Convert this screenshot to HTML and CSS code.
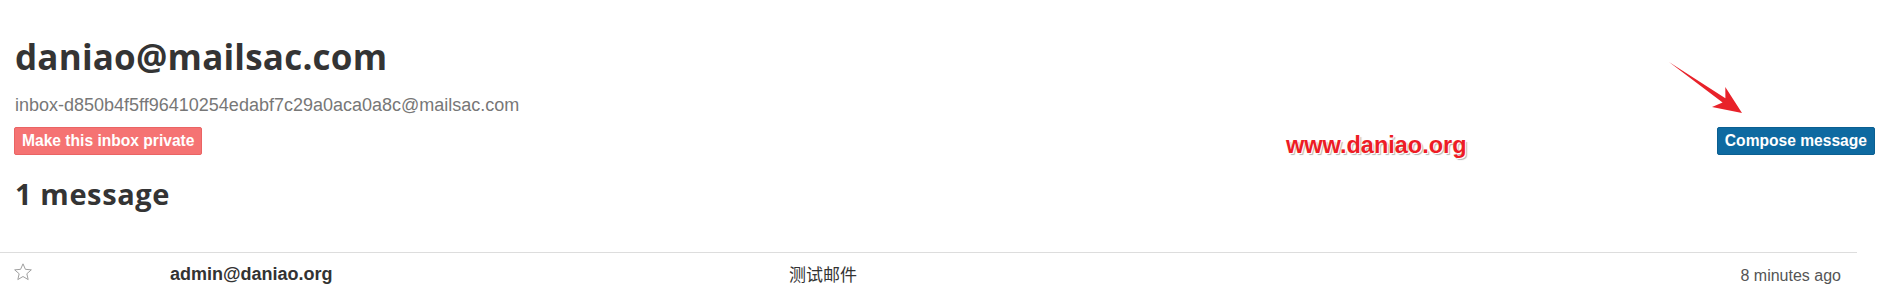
FILE: index.html
```html
<!DOCTYPE html>
<html>
<head>
<meta charset="utf-8">
<link rel="stylesheet" href="styles.css">
</head>
<body>
<div class="page">
  <div class="header">
    <h1 class="title">daniao@mailsac.com</h1>
    <div class="subtitle">inbox-d850b4f5ff96410254edabf7c29a0aca0a8c@mailsac.com</div>
    <div class="actions">
      <button class="btn btn-private">Make this inbox private</button>
      <button class="btn btn-compose">Compose message</button>
    </div>
    <h2 class="count">1 message</h2>
  </div>
  <div class="list">
    <div class="row">
      <div class="cell star-cell">
        <svg class="star" width="20" height="20" viewBox="0 0 24 24"><path d="M12 2.2l2.9 6.6 7.1.6-5.4 4.7 1.6 7-6.2-3.7-6.2 3.7 1.6-7L2 9.4l7.1-.6z" fill="none" stroke="#a0a0a0" stroke-width="1.2" stroke-linejoin="miter"/></svg>
      </div>
      <div class="cell sender">admin@daniao.org</div>
      <div class="cell subject">测试邮件</div>
      <div class="cell time">8 minutes ago</div>
    </div>
  </div>
  <div class="watermark">www.daniao.org</div>
  <svg class="arrow" width="80" height="60" viewBox="0 0 80 60"><polygon points="0,0 56.4,36.3 56.3,25 73,51 43,45 53.6,40.5" fill="#e8222a"/></svg>
</div>
</body>
</html>
```
FILE: styles.css
```css
* { box-sizing: border-box; }
html, body { margin: 0; padding: 0; background: #fff; }
body { font-family: "Liberation Sans", Arial, sans-serif; color: #333; }
.page { position: relative; width: 1885px; height: 285px; overflow: hidden; }
.header { padding: 35px 10px 0 15px; }
.title {
  margin: 0;
  font-family: "Open Sans", "Noto Sans", sans-serif;
  font-weight: 700;
  font-size: 35px;
  line-height: 43px;
  letter-spacing: 0.2px;
  color: #343434;
}
.subtitle {
  margin-top: 16px;
  font-size: 18px;
  line-height: 22px;
  color: #777;
}
.actions {
  margin-top: 11px;
  display: flex;
  justify-content: space-between;
  align-items: center;
}
.btn {
  font-family: "Liberation Sans", Arial, sans-serif;
  font-weight: 700;
  font-size: 15.6px;
  line-height: 26px;
  height: 28px;
  color: #fff;
  border-radius: 2px;
  padding: 0 7px;
  cursor: pointer;
}
.btn-private { background: #f57373; border: 1px solid #ea6464; margin-left: -1px; }
.btn-compose { background: #0e6aa1; border: 1px solid #0b5f91; }
.count {
  margin: 22px 0 0;
  font-family: "Open Sans", "Noto Sans", sans-serif;
  font-weight: 700;
  font-size: 29px;
  line-height: 34px;
  letter-spacing: 0.6px;
  color: #343434;
}
.list { margin-top: 41px; width: 1857px; border-top: 1px solid #ddd; }
.row {
  display: grid;
  grid-template-columns: 170px 619px 1fr auto;
  align-items: start;
  padding: 9px 16px 0 0;
}
.cell { font-size: 18px; line-height: 22px; }
.star-cell { padding-left: 13px; padding-top: 0; }
.star { display: block; }
.sender { font-weight: 700; color: #333; padding-top: 1px; }
.subject { font-family: "Noto Sans CJK SC", sans-serif; font-size: 17px; color: #333; padding-top: 1px; }
.time { font-size: 16px; color: #555; padding-top: 3px; }
.watermark {
  position: absolute;
  left: 1286px;
  top: 131px;
  font-family: "Liberation Sans", Arial, sans-serif;
  font-weight: 700;
  font-size: 23.5px;
  line-height: 28px;
  color: #ee1c25;
  text-shadow: 1px 1px 0 #fff, 2px 2px 1px #b5b5b5;
}
.arrow { position: absolute; left: 1669px; top: 62px; }
```
